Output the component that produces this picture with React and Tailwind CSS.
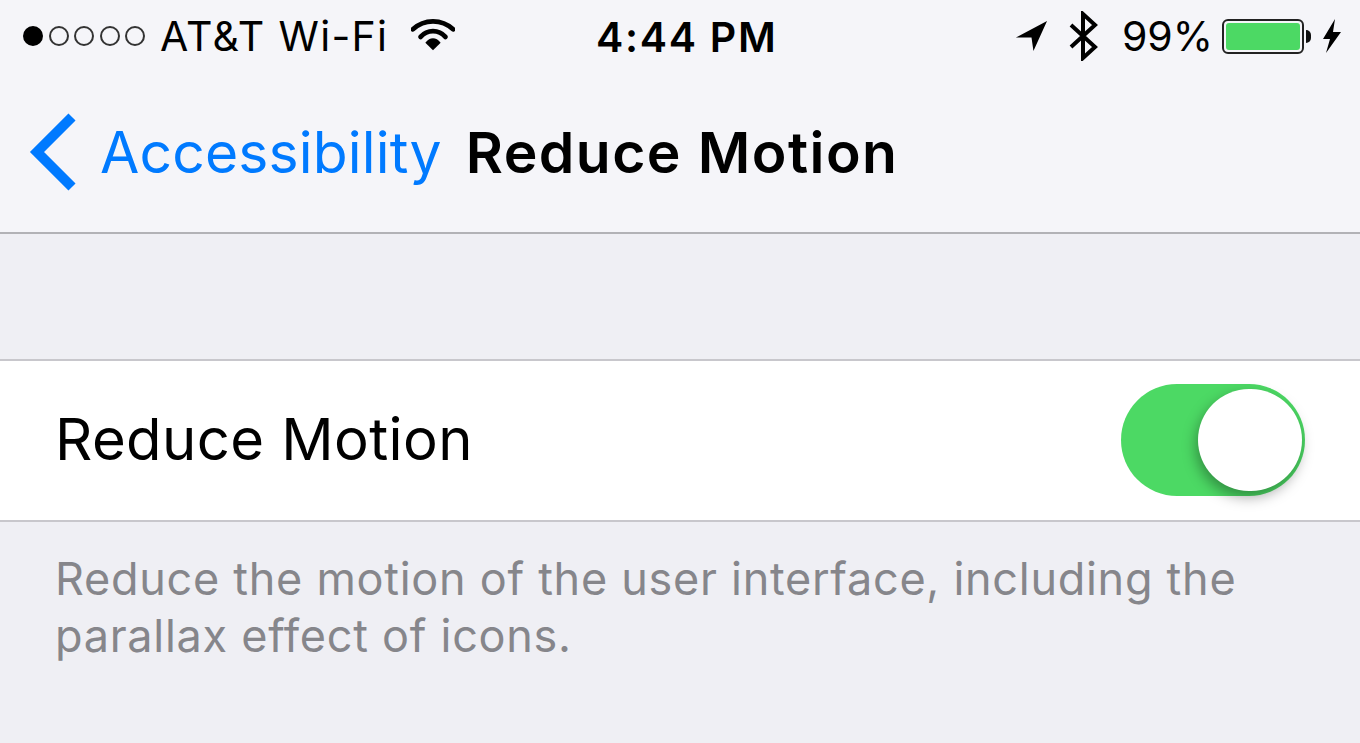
import React from 'react';

const font = { fontFamily: 'Inter, "Liberation Sans", sans-serif' };

const SignalDots = () => (
    <div className="flex items-center gap-[5.5px]">
        <span className="w-5 h-5 rounded-full bg-black border-2 border-black"></span>
        <span className="w-5 h-5 rounded-full border-2 border-[#333]"></span>
        <span className="w-5 h-5 rounded-full border-2 border-[#333]"></span>
        <span className="w-5 h-5 rounded-full border-2 border-[#333]"></span>
        <span className="w-5 h-5 rounded-full border-2 border-[#333]"></span>
    </div>
);

const Wifi = () => (
    <svg width="44" height="36" viewBox="0 0 46 36" className="ml-[23px] mb-[2px]">
        <path d="M2 12 C14 1 32 1 44 12" fill="none" stroke="#000" strokeWidth="5" strokeLinecap="round" />
        <path d="M10 20 C17 12 29 12 36 20" fill="none" stroke="#000" strokeWidth="5" strokeLinecap="round" />
        <path d="M15 26 C20 20 26 20 31 26 L23 34 Z" fill="#000" />
    </svg>
);

const LocationArrow = () => (
    <svg width="33" height="33" viewBox="0 0 34 34">
        <path d="M1 19 L33 2 L19 33 L17 19 Z" fill="#000" />
    </svg>
);

const Bluetooth = () => (
    <svg width="32" height="50" viewBox="0 0 32 50">
        <path d="M3 14 L27 36 L15 47 L15 3 L27 14 L3 36" fill="none" stroke="#000" strokeWidth="4" />
    </svg>
);

const Battery = () => (
    <div className="flex items-center">
        <div className="w-[82px] h-[35px] rounded-[6px] border-2 border-[#222] p-[2px] bg-[#f5f5f9]">
            <div className="w-full h-full rounded-[3px] bg-[#4cd964]"></div>
        </div>
        <div className="w-[5px] h-[13px] ml-[2px] bg-[#111] rounded-r-full"></div>
    </div>
);

const Bolt = () => (
    <svg width="20" height="34" viewBox="0 0 20 34">
        <path d="M13 0 L1 20 L8 20 L4 34 L19 13 L11 13 Z" fill="#000" />
    </svg>
);

const Chevron = () => (
    <svg width="48" height="78" viewBox="0 0 48 78">
        <path d="M43 4 L8 39 L43 74" fill="none" stroke="#007aff" strokeWidth="10" />
    </svg>
);

const Toggle = () => (
    <div className="relative w-[184px] h-[112px] rounded-full bg-[#4cd964] shrink-0 mb-[2px]">
        <div className="absolute right-[3px] top-[5px] w-[104px] h-[102px] rounded-full bg-white shadow-[-2px_6px_14px_rgba(0,0,0,0.35)]"></div>
    </div>
);

export default function App() {
    return (
        <div style={font} className="w-[1360px] h-[743px] overflow-hidden bg-[#efeff4] text-black">
            <div className="h-[234px] bg-[#f5f5f9] border-b-2 border-[#b2b2b6] flex flex-col">
                <div className="h-[72px] pl-[23px] pr-[18px] flex items-center relative">
                    <SignalDots />
                    <span className="ml-[15px] text-[41px] leading-none tracking-[1.3px]">AT&amp;T Wi-Fi</span>
                    <Wifi />
                    <div className="absolute left-[596px] top-[15px] text-[41px] leading-[44px] font-semibold tracking-[1.7px]">4:44 PM</div>
                    <div className="ml-auto flex items-center">
                        <div className="-ml-[4px] mr-[3px] mb-[1px]"><LocationArrow /></div>
                        <div className="ml-[17px] mr-[2px]"><Bluetooth /></div>
                        <span className="ml-[20px] text-[41px] leading-none">99%</span>
                        <div className="ml-[9px]"><Battery /></div>
                        <div className="ml-[11px]"><Bolt /></div>
                    </div>
                </div>
                <div className="flex items-center pl-[29px] h-[158px] pt-[2px]">
                    <Chevron />
                    <span className="ml-[23px] text-[57px] leading-none text-[#007aff] tracking-[0.15px]">Accessibility</span>
                    <span className="ml-[24px] text-[57px] leading-none font-semibold tracking-[1.45px]">Reduce Motion</span>
                </div>
            </div>
            <div className="h-[125px]"></div>
            <div className="h-[163px] bg-white border-y-2 border-[#c8c7cc] flex items-center justify-between pl-[55px] pr-[55px]">
                <span className="text-[58px] leading-none tracking-[0.4px] mb-[4px]">Reduce Motion</span>
                <Toggle />
            </div>
            <div className="pt-[28px] pl-[55px] pr-[100px] text-[45px] leading-[57px] text-[#86868b] tracking-[0.72px]">
                Reduce the motion of the user interface, including the parallax effect of icons.
            </div>
        </div>
    );
}
